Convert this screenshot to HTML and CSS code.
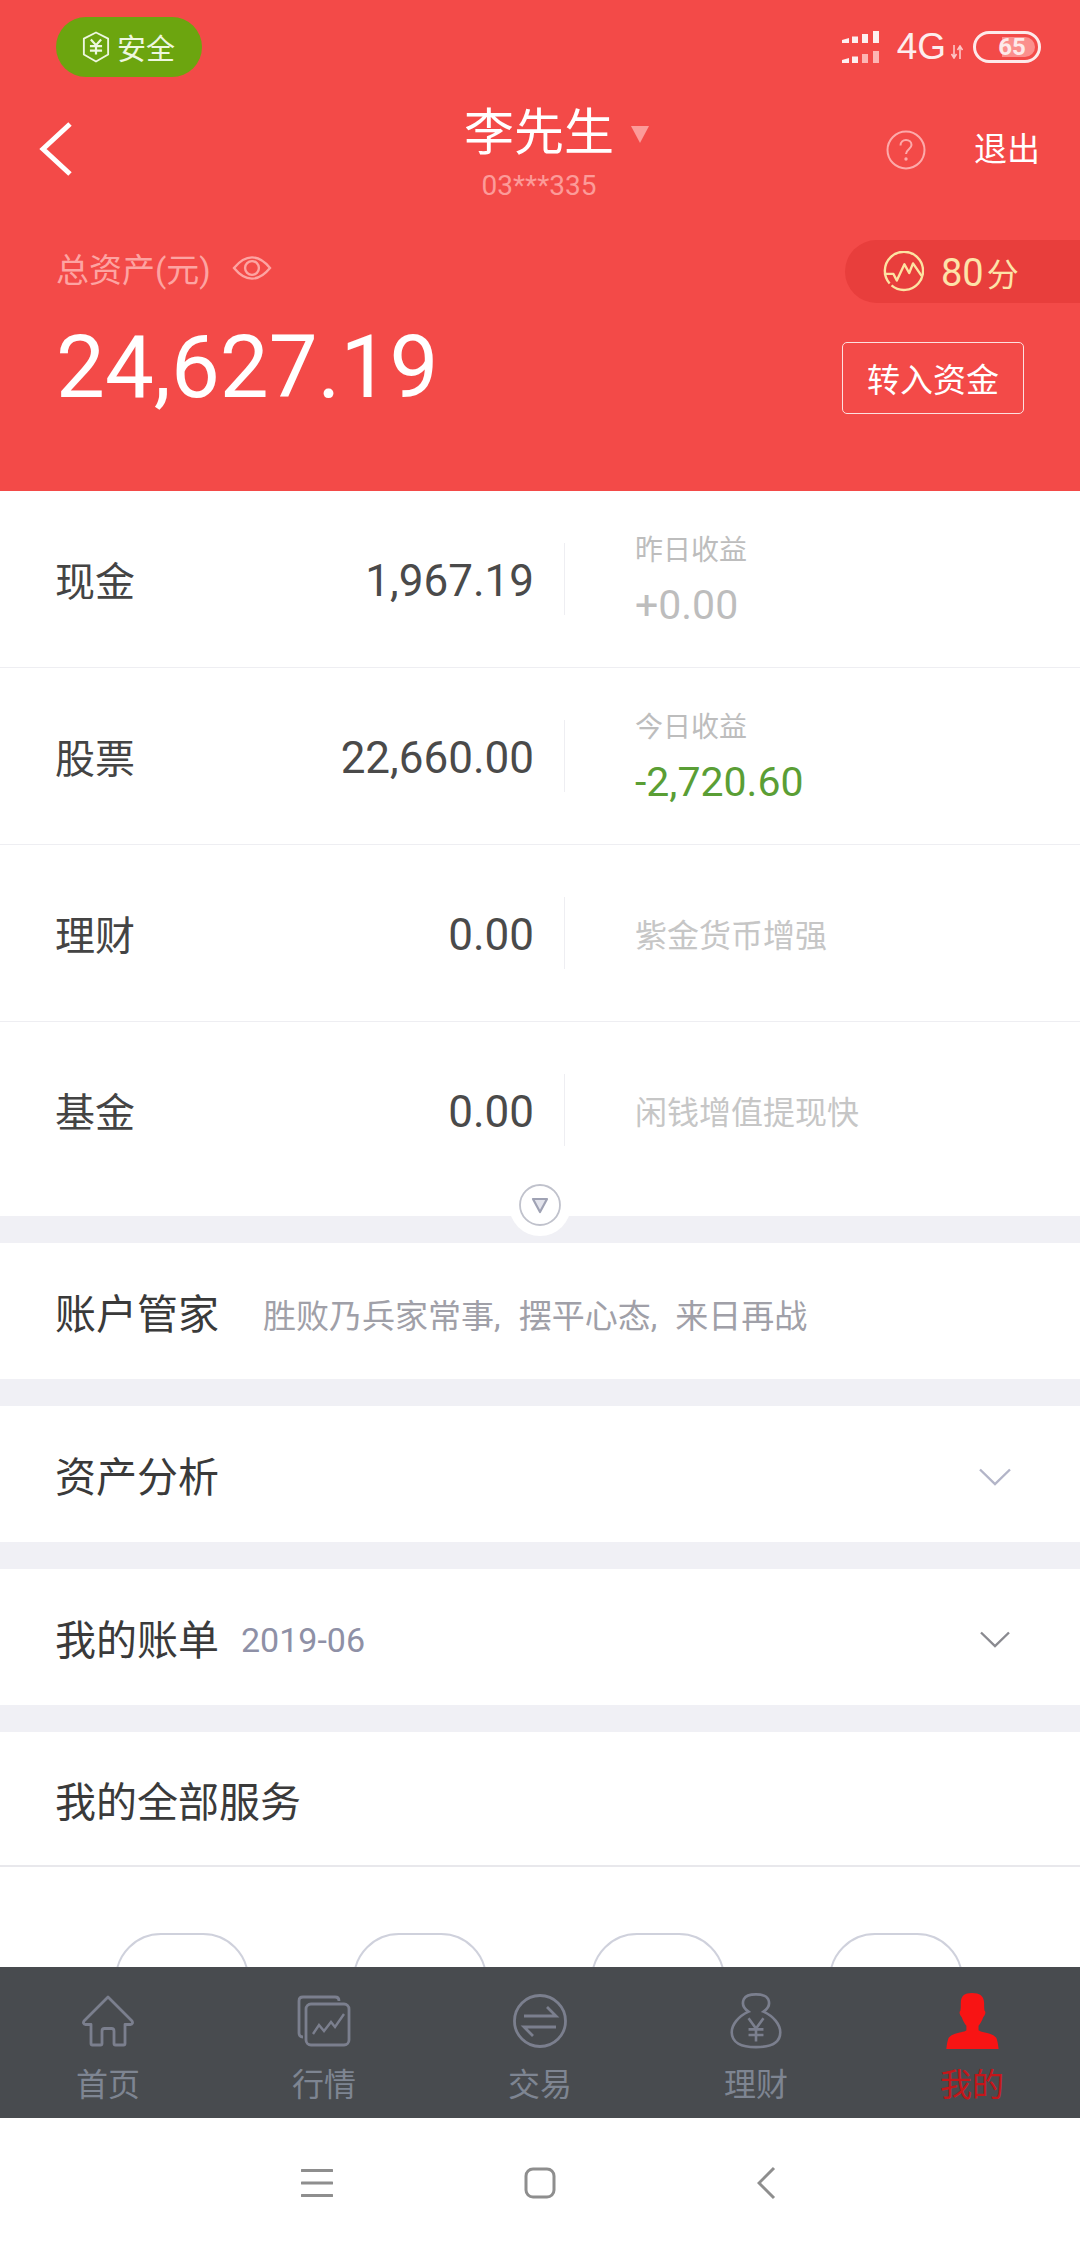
FILE: index.html
```html
<!DOCTYPE html>
<html lang="zh">
<head>
<meta charset="utf-8">
<title>我的</title>
<link rel="stylesheet" href="styles.css">
</head>
<body>
<div class="screen">
  <main class="content">
    <div class="lead">
    <header class="hero">
      <div class="status">
        <div class="safe">
          <svg class="safe-icon" viewBox="0 0 30 34"><path d="M15 1.500 28 8v17L15 32.500 2 25V8z" fill="none" stroke="#eef7e0" stroke-width="2" stroke-linejoin="round"/><path d="M9.500 9 15 15l5.500-6M8.500 16h13M8.500 21h13M15 15v10" fill="none" stroke="#eef7e0" stroke-width="2.400"/></svg>
          <span>安全</span>
        </div>
        <div class="sys">
          <svg class="signal" viewBox="0 0 40 32"><g fill="#fdf0f0"><path d="M0 9l7-2v5H0zM10 5.500h6V12h-6zM20 3h6v9h-6zM31 0h6v12h-6z"/><path d="M0 29l7-2v5H0zM10 25.500h6V32h-6z"/></g><g fill="#fdb5b3"><path d="M20 23h6v9h-6zM31 20h6v12h-6z"/></g></svg>
          <span class="net">4G</span>
          <svg class="updown" viewBox="0 0 12 14"><path d="M3 0v12M0.500 9 3 13l2.500-4M9 14V2M6.500 5 9 1l2.500 4" fill="none" stroke="#fdc6c6" stroke-width="1.600"/></svg>
          <div class="battery"><span class="battery-fill"></span><span class="battery-num">65</span></div>
        </div>
      </div>
      <div class="topbar">
        <svg class="back" viewBox="0 0 36 56"><path d="M32 3 5 28l27 25" fill="none" stroke="#fff" stroke-width="5"/></svg>
        <div class="who">
          <div class="name">李先生<span class="caret"></span></div>
          <div class="acct">03***335</div>
        </div>
        <div class="actions">
          <svg class="help" viewBox="0 0 40 40"><circle cx="20" cy="20" r="18.500" fill="none" stroke="#fdaaaa" stroke-width="2"/><path d="M14.500 15.500c0-3.500 2.500-5.500 5.500-5.500s5.500 2 5.500 5c0 4-5.500 4.500-5.500 9" fill="none" stroke="#fdaaaa" stroke-width="2"/><circle cx="20" cy="29" r="1.700" fill="#fdaaaa"/></svg>
          <span class="logout">退出</span>
        </div>
      </div>
      <div class="assets">
        <div class="total">
          <div class="total-label">总资产(元)
            <svg class="eye" viewBox="0 0 42 26"><path d="M1.500 13C8 5 14 1.500 21 1.500S34 5 40.500 13C34 21 28 24.500 21 24.500S8 21 1.500 13z" fill="none" stroke="#fda4a2" stroke-width="2.600"/><circle cx="21" cy="13" r="7.500" fill="none" stroke="#fda4a2" stroke-width="2.600"/></svg>
          </div>
          <div class="total-num">24,627.19</div>
        </div>
        <div class="side">
          <div class="score">
            <svg class="score-icon" viewBox="0 0 44 44"><path d="M8 34A20 20 0 1 1 38 34 20 20 0 0 1 10 36" fill="none" stroke="#fde3a2" stroke-width="2.500"/><path d="M2 24h10l3.500 7 8-17 5 9 4-10 9 13" fill="none" stroke="#fde3a2" stroke-width="2.500" stroke-linejoin="round"/></svg>
            <span class="score-text"><span class="score-num">80</span>分</span>
          </div>
          <button class="transfer">转入资金</button>
        </div>
      </div>
    </header>

    <section class="rows">
      <div class="row">
        <div class="row-label">现金</div>
        <div class="row-val">1,967.19</div>
        <div class="row-info"><div class="info-t">昨日收益</div><div class="info-n">+0.00</div></div>
      </div>
      <div class="row">
        <div class="row-label">股票</div>
        <div class="row-val">22,660.00</div>
        <div class="row-info"><div class="info-t">今日收益</div><div class="info-n green">-2,720.60</div></div>
      </div>
      <div class="row">
        <div class="row-label">理财</div>
        <div class="row-val">0.00</div>
        <div class="row-info"><div class="info-p">紫金货币增强</div></div>
      </div>
      <div class="row last">
        <div class="row-label">基金</div>
        <div class="row-val">0.00</div>
        <div class="row-info"><div class="info-p">闲钱增值提现快</div></div>
      </div>
      <div class="collapse">
        <svg class="collapse-icon" viewBox="0 0 42 42"><circle cx="21" cy="21" r="20" fill="#fff" stroke="#c0c2cc" stroke-width="1.800"/><path d="M14 15h14l-7 13z" fill="#e3e4ec" stroke="#9fa2b4" stroke-width="2.200" stroke-linejoin="round"/></svg>
      </div>
    </section>
    </div>

    <section class="card">
      <span class="card-title">账户管家</span><span class="motto">胜败乃兵家常事, 摆平心态, 来日再战</span>
    </section>
    <section class="card">
      <span class="card-title">资产分析</span>
      <svg class="chev" viewBox="0 0 32 18"><path d="M1 1.500 16 16 31 1.500" fill="none" stroke="#b3b5c8" stroke-width="2.400"/></svg>
    </section>
    <section class="card">
      <span class="card-title">我的账单</span><span class="month">2019-06</span>
      <svg class="chev" viewBox="0 0 32 18"><path d="M2 1.500 16 15 30 1.500" fill="none" stroke="#8a8a90" stroke-width="2.400"/></svg>
    </section>
    <section class="services">
      <div class="services-head">我的全部服务</div>
      <div class="tiles">
        <div class="tile"></div><div class="tile"></div><div class="tile"></div><div class="tile"></div>
      </div>
    </section>
  </main>

  <nav class="tabs">
    <div class="tab">
      <svg class="tab-icon" viewBox="0 0 56 56"><path d="M28 4 4 28c-1 1.500-.5 3.500 1.500 3.500H11v19c0 1 .5 1.500 1.500 1.500h8c1 0 1.500-.5 1.500-1.500V38c0-1.500 1-2.500 2.500-2.500h7c1.500 0 2.500 1 2.500 2.500v12.500c0 1 .5 1.500 1.500 1.500h8c1 0 1.500-.5 1.500-1.500v-19h5.500c2 0 2.500-2 1.500-3.500z" fill="none" stroke="#7b7f8e" stroke-width="2.800" stroke-linejoin="round"/></svg>
      <span>首页</span>
    </div>
    <div class="tab">
      <svg class="tab-icon" viewBox="0 0 56 56"><path d="M7 44c-3 0-4-2-4-4V8c0-3 2-4 4-4h32c3 0 4 2 4 4" fill="none" stroke="#7b7f8e" stroke-width="2.800"/><rect x="10" y="11" width="43" height="41" rx="5" fill="none" stroke="#7b7f8e" stroke-width="2.800"/><path d="M17 41l6-9 5 6 7-9 4 5 9-13" fill="none" stroke="#7b7f8e" stroke-width="2.400"/></svg>
      <span>行情</span>
    </div>
    <div class="tab">
      <svg class="tab-icon" viewBox="0 0 56 56"><circle cx="28" cy="28" r="25.500" fill="none" stroke="#7b7f8e" stroke-width="2.800"/><path d="M12 23h32L35 14M44 34H12l9 9" fill="none" stroke="#7b7f8e" stroke-width="2.800"/></svg>
      <span>交易</span>
    </div>
    <div class="tab">
      <svg class="tab-icon" viewBox="0 0 56 60"><path d="M20 20C14 16 13 11 15 6.500 17 2.500 22 1.500 28 1.500S39 2.500 41 6.500C43 11 42 16 36 20 47 25 54 34 54 42 54 53 44 58 28 58S2 53 2 42C2 34 9 25 20 20z" fill="none" stroke="#7b7f8e" stroke-width="2.800"/><path d="M20 27l8 11 8-11M28 38v14M20 39h16M20 45h16" fill="none" stroke="#7b7f8e" stroke-width="2.800"/></svg>
      <span>理财</span>
    </div>
    <div class="tab active">
      <svg class="tab-icon" viewBox="0 0 56 60"><path d="M28 0c8 0 13 3 13 11 0 4 0 6 .5 8 1.500 1 1 4-1.500 7-1 3-3 7-5 9v5c4 3 14 2 19 8 1 2 2 7 2.500 12H.500C1 55 2 50 3 48c5-6 15-5 19-8v-5c-2-2-4-6-5-9-2.500-3-3-6-1.500-7 .5-2 .5-4 .5-8C16 3 20 0 28 0z" fill="#f81414"/></svg>
      <span>我的</span>
    </div>
  </nav>

  <footer class="sysnav">
    <svg class="sys-menu" viewBox="0 0 32 30"><path d="M1 2.500h30M1 15h30M1 27.500h30" stroke="#8e8e8e" stroke-width="3" stroke-linecap="round" fill="none"/></svg>
    <svg class="sys-home" viewBox="0 0 32 32"><rect x="2" y="2" width="28" height="28" rx="7" fill="none" stroke="#8e8e8e" stroke-width="3"/></svg>
    <svg class="sys-back" viewBox="0 0 20 34"><path d="M17 2 2 17l15 15" fill="none" stroke="#8e8e8e" stroke-width="3"/></svg>
  </footer>
</div>
</body>
</html>
```
FILE: styles.css
```css
* { box-sizing: border-box; }
html, body { margin: 0; padding: 0; }
body {
  width: 1080px;
  height: 2248px;
  overflow: hidden;
  background: #fff;
  font-family: Roboto, "Noto Sans CJK SC", sans-serif;
}
.screen { display: flex; flex-direction: column; height: 2248px; }
.content { flex: 1; min-height: 0; overflow: hidden; background: #f0f0f5; display: flex; flex-direction: column; gap: 27px; }
.lead { flex: none; }

/* hero */
.hero { height: 491px; background: #f34a48; color: #fff; padding-left: 56px; }
.status { height: 77px; padding-top: 17px; display: flex; justify-content: space-between; }
.safe { width: 146px; height: 60px; border-radius: 30px; background: #6ca50f; color: #eef7e0; display: flex; align-items: center; padding-left: 26px; gap: 7px; font-size: 29px; }
.safe-icon { width: 28px; height: 32px; }
.sys { display: flex; align-items: center; height: 60px; margin-right: 39px; }
.signal { width: 40px; height: 32px; margin-right: 15px; }
.net { font-family: "Liberation Sans", sans-serif; font-size: 37px; color: #fdeeee; margin-right: 5px; }
.updown { width: 12px; height: 14px; margin: 10px 10px 0 0; }
.battery { position: relative; width: 68px; height: 32px; border: 3px solid #fdeaea; border-radius: 16px; display: flex; align-items: center; justify-content: center; padding-left: 10px; }
.battery-fill { position: absolute; left: 26px; right: 3px; top: 3px; bottom: 3px; border-radius: 0 11px 11px 0; background: #fb8f8d; }
.battery-num { position: relative; font-size: 24px; font-weight: 700; color: #fdeaea; }

.topbar { height: 163px; display: grid; grid-template-columns: 1fr auto 1fr; margin-left: -56px; padding: 0 40px 0 38px; }
.back { width: 36px; height: 56px; margin-top: 44px; }
.who { text-align: center; padding-top: 26px; }
.name { position: relative; font-size: 50px; line-height: 60px; }
.caret { position: absolute; left: 100%; top: 23px; margin-left: 17px; width: 0; height: 0; border-left: 9px solid transparent; border-right: 9px solid transparent; border-top: 17px solid #fc9b99; }
.acct { font-size: 28px; line-height: 36px; margin-top: 5px; color: #fc9b99; }
.actions { display: flex; justify-content: flex-end; align-items: flex-start; padding-top: 53px; gap: 48px; }
.help { width: 40px; height: 40px; }
.logout { font-size: 33px; line-height: 40px; }

.assets { display: flex; justify-content: space-between; }
.total-label { display: flex; align-items: center; height: 56px; font-size: 33px; color: #fda4a2; gap: 21px; }
.eye { width: 40px; height: 24px; }
.total-num { font-size: 87px; line-height: 110px; margin-top: 16px; letter-spacing: 0; }
.side { width: 235px; display: flex; flex-direction: column; gap: 39px; }
.score { height: 63px; border-radius: 32px 0 0 32px; background: #e83e3c; display: flex; align-items: center; padding-left: 37px; gap: 17px; color: #fde3a9; }
.score-icon { width: 42px; height: 42px; }
.score-text { font-size: 32px; }
.score-num { font-size: 38px; margin-right: 3px; }
.transfer { width: 182px; height: 72px; margin-left: -3px; background: transparent; border: 1.500px solid #fde0df; border-radius: 5px; color: #fff; font: 33px Roboto, "Noto Sans CJK SC", sans-serif; padding: 0; }

/* rows */
.rows { position: relative; background: #fff; }
.row { height: 177px; display: flex; align-items: center; padding-left: 55px; border-bottom: 1px solid #eeeef2; }
.row.last { height: 194px; padding-bottom: 18px; border-bottom: 0; }
.row-label { width: 160px; font-size: 40px; color: #444; }
.row-val { width: 319px; text-align: right; font-size: 44px; color: #4a4a4a; padding-top: 3px; }
.row-info { margin-left: 30px; height: 72px; border-left: 1px solid #eeeef2; padding-left: 70px; display: flex; flex-direction: column; justify-content: center; white-space: nowrap; }
.info-t { font-size: 28px; line-height: 36px; color: #bdbdbd; margin-top: -3px; }
.info-n { font-size: 41px; line-height: 50px; color: #bdbdbd; margin-top: 11px; margin-bottom: -8px; }
.green { color: #5a9e35; }
.info-p { font-size: 32px; color: #c6c6c6; }
.collapse { position: absolute; left: 509px; bottom: -20px; width: 62px; height: 62px; border-radius: 50%; background: #fff; display: flex; align-items: center; justify-content: center; }
.collapse-icon { width: 42px; height: 42px; }

/* cards */
.card { height: 136px; background: #fff; display: flex; align-items: center; padding: 0 69px 0 55px; flex: none; }
.card-title { font-size: 41px; color: #3a3a3a; }
.motto { margin-left: 44px; padding-top: 6px; font-size: 33px; word-spacing: 10px; color: #a0a0a8; }
.month { margin-left: 22px; padding-top: 6px; font-size: 34px; color: #8e90a6; }
.chev { width: 32px; height: 18px; margin-left: auto; margin-top: 6px; }

.services { flex: 1; min-height: 0; background: #fff; overflow: hidden; }
.services-head { height: 135px; display: flex; align-items: center; padding-left: 55px; font-size: 41px; color: #3a3a3a; border-bottom: 2px solid #e8e8ec; }
.tiles { display: grid; grid-template-columns: repeat(4, 238px); padding: 66px 63px 0; }
.tile { width: 134px; height: 134px; margin: 0 auto; border: 2.500px solid #cfd1dc; border-radius: 46px; }

/* tab bar */
.tabs { height: 151px; flex: none; background: #484b4f; display: grid; grid-template-columns: repeat(5, 216px); }
.tab { display: flex; flex-direction: column; align-items: center; padding-top: 26px; color: #7e8592; font-size: 32px; line-height: 40px; }
.tab-icon { width: 56px; height: 56px; margin-bottom: 16px; }
.tab.active { color: #c4161a; }

.sysnav { height: 130px; flex: none; background: #fff; display: grid; grid-template-columns: 1fr 32px 1fr; align-items: center; }
.sys-menu { width: 32px; height: 30px; justify-self: end; margin-right: 191px; }
.sys-home { width: 32px; height: 32px; }
.sys-back { width: 20px; height: 34px; margin-left: 201px; }
```
